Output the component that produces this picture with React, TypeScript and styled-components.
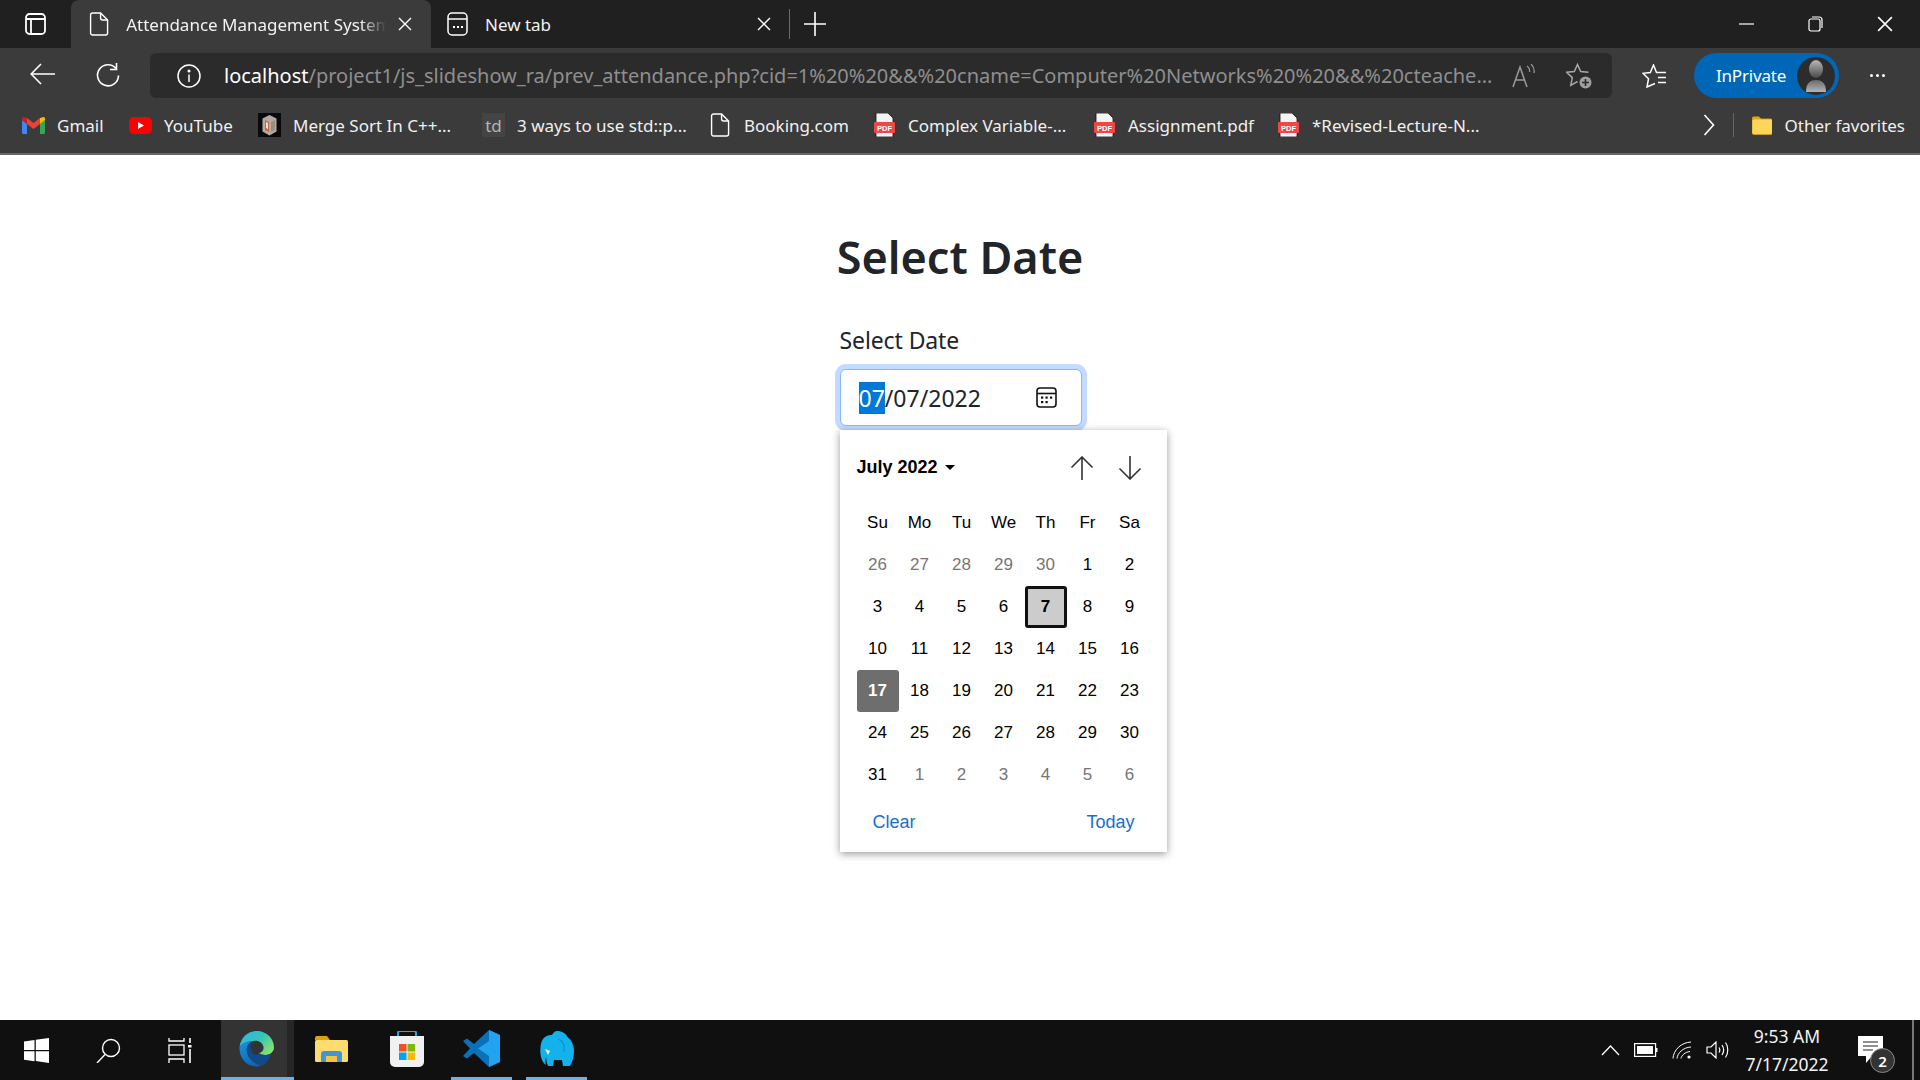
import React from "react";
import styled, { createGlobalStyle } from "styled-components";

const GlobalStyle = createGlobalStyle`
  html, body { margin: 0; padding: 0; background: #fff; }
  body { font-family: "Noto Sans", "Open Sans", sans-serif; }
  * { box-sizing: border-box; }
`;

const Screen = styled.div`
  width: 1920px;
  height: 1080px;
  display: flex;
  flex-direction: column;
  overflow: hidden;
`;

/* ---------- tab strip ---------- */
const TabStrip = styled.div`
  height: 48px;
  flex: none;
  background: #202020;
  display: flex;
  align-items: flex-end;
  color: #fff;
`;
const SidebarBtn = styled.div`
  width: 71px;
  height: 48px;
  padding-left: 25px;
  display: flex;
  align-items: center;
`;
const Tab = styled.div<{ $active?: boolean }>`
  height: ${(p) => (p.$active ? "48px" : "44px")};
  width: ${(p) => (p.$active ? "360px" : "352px")};
  padding: ${(p) => (p.$active ? "0 19px 0 18px" : "0 12px 4px 16px")};
  background: ${(p) => (p.$active ? "#3b3b3b" : "transparent")};
  border-radius: 8px 8px 0 0;
  display: flex;
  align-items: center;
`;
const TabTitle = styled.div<{ $fade?: boolean }>`
  flex: 1;
  margin: 0 12px 0 17px;
  font-size: 17px;
  white-space: nowrap;
  overflow: hidden;
  color: #f2f2f2;
  ${(p) =>
    p.$fade &&
    `-webkit-mask-image: linear-gradient(to right, #000 90%, transparent 100%);
     mask-image: linear-gradient(to right, #000 90%, transparent 100%);`}
`;
const TabDivider = styled.div`
  width: 1px;
  height: 30px;
  margin: 0 0 9px 6px;
  background: #6b6b6b;
`;
const NewTabBtn = styled.div`
  width: 50px;
  height: 48px;
  display: flex;
  align-items: center;
  justify-content: center;
`;
const WindowControls = styled.div`
  margin-left: auto;
  height: 48px;
  display: flex;
  align-items: center;
  gap: 54px;
  padding-right: 27px;
`;

/* ---------- toolbar ---------- */
const Toolbar = styled.div`
  height: 58px;
  flex: none;
  background: #3b3b3b;
  display: flex;
  align-items: center;
  padding: 0 0 3px 30px;
  color: #fff;
`;
const NavButtons = styled.div`
  width: 120px;
  display: flex;
  gap: 40px;
`;
const AddressBar = styled.div`
  width: 1462px;
  height: 45px;
  border-radius: 6px;
  background: #2b2b2b;
  display: flex;
  align-items: center;
  padding: 0 20px 0 27px;
`;
const UrlText = styled.div`
  width: 1280px;
  margin-left: 23px;
  font-size: 20px;
  white-space: nowrap;
  overflow: hidden;
  color: #8f8f8f;
`;
const UrlHost = styled.span`
  color: #fff;
`;
const AddressIcons = styled.div`
  margin-left: auto;
  display: flex;
  align-items: center;
  gap: 30px;
`;
const ToolbarRight = styled.div`
  display: flex;
  align-items: center;
  margin-left: 30px;
`;
const PrivatePill = styled.div`
  width: 145px;
  height: 45px;
  margin-left: 27px;
  border-radius: 23px;
  background: #0067b8;
  display: flex;
  align-items: center;
  justify-content: space-between;
  padding: 0 4px 0 22px;
  font-size: 17px;
  letter-spacing: -0.2px;
`;
const Avatar = styled.div`
  width: 38px;
  height: 38px;
  border-radius: 50%;
  background: #2c2c2c;
  display: flex;
  align-items: center;
  justify-content: center;
`;
const MoreBtn = styled.div`
  margin-left: 31px;
  display: flex;
  gap: 3px;
`;
const MoreDot = styled.span`
  width: 3px;
  height: 3px;
  border-radius: 50%;
  background: #fff;
`;

/* ---------- favorites bar ---------- */
const FavBar = styled.div`
  height: 49px;
  flex: none;
  background: #3b3b3b;
  border-bottom: 2px solid #666;
  display: flex;
  align-items: center;
  padding: 0 0 9px 22px;
  color: #fff;
`;
const FavItem = styled.div<{ $w: number }>`
  width: ${(p) => p.$w}px;
  display: flex;
  align-items: center;
  gap: 12px;
  font-size: 17px;
  white-space: nowrap;
  color: #f0f0f0;
`;
const FavIconBox = styled.div`
  width: 23px;
  height: 24px;
  flex: none;
  display: flex;
  align-items: center;
  justify-content: center;
`;
const TdIcon = styled(FavIconBox)`
  background: #444;
  color: #b5b5b5;
  font-size: 17px;
`;
const FavEnd = styled.div`
  margin-left: auto;
  display: flex;
  align-items: center;
  padding-right: 15px;
`;
const FavDivider = styled.div`
  width: 1px;
  height: 24px;
  margin: 0 18px 0 18px;
  background: #666;
`;

/* ---------- page ---------- */
const Content = styled.main`
  flex: 1;
  background: #fff;
  display: flex;
  flex-direction: column;
  align-items: center;
  padding-top: 72px;
  color: #212529;
`;
const Heading = styled.h1`
  margin: 0;
  height: 60px;
  line-height: 60px;
  font-size: 45px;
  font-weight: 600;
  font-family: "Noto Sans", sans-serif;
`;
const Field = styled.div`
  position: relative;
  width: 242px;
  margin-top: 35px;
  margin-left: 1px;
`;
const Label = styled.label`
  display: block;
  font-size: 23px;
  line-height: 36px;
  margin-bottom: 11px;
  letter-spacing: -0.1px;
`;
const DateInput = styled.div`
  height: 57px;
  border: 1px solid #86b7fe;
  border-radius: 6px;
  box-shadow: 0 0 0 5px #c2dbfe;
  background: #fff;
  display: flex;
  align-items: center;
  justify-content: space-between;
  padding: 0 24px 0 18px;
  font-size: 23px;
  color: #212529;
`;
const DateSegment = styled.span`
  background: #0078d7;
  color: #fff;
`;

/* ---------- date picker ---------- */
const Picker = styled.div`
  position: absolute;
  left: 0;
  top: 108px;
  width: 327px;
  height: 422px;
  padding: 0 16px 0 17px;
  background: #fff;
  box-shadow: 0 2px 8px rgba(0, 0, 0, 0.4);
  font-family: "Liberation Sans", Arial, sans-serif;
  font-size: 17px;
  color: #000;
`;
const PickerHead = styled.div`
  height: 72px;
  padding: 4px 9px 0 0;
  display: flex;
  align-items: center;
  justify-content: space-between;
`;
const MonthLabel = styled.div`
  display: flex;
  align-items: center;
  gap: 7px;
  margin-bottom: 2px;
  font-weight: 700;
  font-size: 18px;
`;
const Caret = styled.span`
  width: 0;
  height: 0;
  border-left: 5px solid transparent;
  border-right: 5px solid transparent;
  border-top: 5px solid #000;
`;
const Arrows = styled.div`
  display: flex;
  gap: 24px;
`;
const DayGrid = styled.div`
  display: grid;
  grid-template-columns: repeat(7, 42px);
  grid-auto-rows: 42px;
`;
const WeekDay = styled.div`
  display: flex;
  align-items: center;
  justify-content: center;
`;
const Day = styled.div<{ $muted?: boolean; $selected?: boolean; $today?: boolean }>`
  display: flex;
  align-items: center;
  justify-content: center;
  border-radius: 3px;
  color: ${(p) => (p.$today ? "#fff" : p.$muted ? "#767676" : "#000")};
  background: ${(p) => (p.$today ? "#6e6e6e" : p.$selected ? "#cccccc" : "transparent")};
  border: ${(p) => (p.$selected ? "3px solid #111" : "none")};
  font-weight: ${(p) => (p.$today || p.$selected ? 700 : 400)};
`;
const PickerFoot = styled.div`
  display: flex;
  justify-content: space-between;
  padding: 16px 16px 0 16px;
  font-size: 18px;
  color: #1a6ed1;
`;

/* ---------- taskbar ---------- */
const Taskbar = styled.footer`
  height: 60px;
  flex: none;
  background: #101010;
  display: flex;
  align-items: stretch;
  color: #fff;
`;
const SysGroup = styled.div`
  display: flex;
  padding-right: 5px;
`;
const SysButton = styled.div`
  width: 72px;
  display: flex;
  align-items: center;
  justify-content: center;
`;
const TaskApp = styled.div<{ $active?: boolean; $running?: boolean }>`
  width: ${(p) => (p.$active ? "73px" : "61px")};
  margin: 0 ${(p) => (p.$active ? "0" : "7px")};
  padding-right: ${(p) => (p.$active ? "3px" : "0")};
  display: flex;
  align-items: center;
  justify-content: center;
  background: ${(p) =>
    p.$active ? "linear-gradient(to right, #333 66px, #262626 66px)" : "transparent"};
  border-bottom: 3px solid ${(p) => (p.$active || p.$running ? "#6cb0e6" : "transparent")};
`;
const Tray = styled.div`
  margin-left: auto;
  display: flex;
  align-items: center;
  border-right: 2px solid #777;
  margin-right: 6px;
  height: 100%;
`;
const TrayIcons = styled.div`
  display: flex;
  align-items: center;
  gap: 14px;
`;
const Clock = styled.div`
  width: 112px;
  margin-left: 2px;
  text-align: center;
  font-size: 17.5px;
  line-height: 28px;
  color: #f4f4f4;
  font-family: "Noto Sans", sans-serif;
`;
const Notify = styled.div`
  position: relative;
  margin: 0 29px 0 15px;
  width: 25px;
  height: 28px;
`;
const NotifyBadge = styled.div`
  position: absolute;
  right: -12px;
  bottom: -9px;
  width: 25px;
  height: 25px;
  border-radius: 50%;
  background: #333;
  border: 1px solid #888;
  font-size: 15px;
  font-weight: 600;
  display: flex;
  align-items: center;
  justify-content: center;
`;

/* ---------- icons ---------- */
type IconProps = { size?: number; color?: string };

const DocIcon = ({ size = 24, color = "#fff" }: IconProps) => (
  <svg width={size * 0.84} height={size} viewBox="0 0 20 24" fill="none" stroke={color} strokeWidth="1.4">
    <path d="M1.5 3a2 2 0 0 1 2-2h8l7 7v13a2 2 0 0 1-2 2h-13a2 2 0 0 1-2-2z" />
    <path d="M11.5 1v5a2 2 0 0 0 2 2h5" />
  </svg>
);
const SidebarIcon = () => (
  <svg width="21" height="22" viewBox="0 0 21 22" fill="none" stroke="#fff" strokeWidth="1.8">
    <rect x="1" y="1" width="19" height="20" rx="3.5" />
    <path d="M1 6h19M6 6v15" />
  </svg>
);
const CloseIcon = ({ size = 14, color = "#fff" }: IconProps) => (
  <svg width={size} height={size} viewBox="0 0 14 14" stroke={color} strokeWidth="1.4">
    <path d="M1 1l12 12M13 1L1 13" />
  </svg>
);
const NewTabIcon = () => (
  <svg width="21" height="24" viewBox="0 0 21 24" fill="none" stroke="#fff" strokeWidth="1.5">
    <rect x="1" y="1" width="19" height="22" rx="4" />
    <path d="M1 7h19" />
    <path d="M6 15h2M10 15h2M14 15h2" strokeWidth="2.2" />
  </svg>
);
const PlusIcon = () => (
  <svg width="22" height="24" viewBox="0 0 22 24" stroke="#fff" strokeWidth="1.6">
    <path d="M11 0v24M0 12h22" />
  </svg>
);
const MinIcon = () => (
  <svg width="15" height="2" viewBox="0 0 15 2" stroke="#fff" strokeWidth="1.2">
    <path d="M0 1h15" />
  </svg>
);
const RestoreIcon = () => (
  <svg width="15" height="16" viewBox="0 0 15 16" fill="none" stroke="#fff" strokeWidth="1.2">
    <rect x="1" y="3" width="11" height="12" rx="2" />
    <path d="M4 1h7a3 3 0 0 1 3 3v8" />
  </svg>
);
const BackIcon = () => (
  <svg width="25" height="22" viewBox="0 0 25 22" fill="none" stroke="#fff" strokeWidth="1.6">
    <path d="M25 11H1.5M11 1L1.2 11 11 21" />
  </svg>
);
const RefreshIcon = () => (
  <svg width="25" height="25" viewBox="0 0 25 25" fill="none" stroke="#fff" strokeWidth="1.6">
    <path d="M21 5.5A10.5 10.5 0 1 0 23.5 12.5" />
    <path d="M21.5 0v6.5H15" />
  </svg>
);
const InfoIcon = () => (
  <svg width="24" height="24" viewBox="0 0 24 24" fill="none" stroke="#fff" strokeWidth="1.5">
    <circle cx="12" cy="12" r="11" />
    <path d="M12 10.5V18" />
    <circle cx="12" cy="7" r="0.8" fill="#fff" />
  </svg>
);
const ReadAloudIcon = () => (
  <svg width="24" height="24" viewBox="0 0 24 24" fill="none" stroke="#9a9a9a" strokeWidth="1.5">
    <path d="M1 23L8 3l7 20M3.6 16h9" />
    <path d="M15 2a6 6 0 0 1 2.5 6M19 0a10 10 0 0 1 3 9" strokeWidth="1.2" />
  </svg>
);
const StarPlusIcon = () => (
  <svg width="26" height="26" viewBox="0 0 26 26" fill="none" stroke="#a8a8a8" strokeWidth="1.5">
    <path d="M22.5 9.3L14.7 8.5 11.5 1.500 8.300 8.500.5 9.300l5.800 5.300-1.500 7.700 6.700-3.800" />
    <circle cx="19.500" cy="19.500" r="6" fill="#a0a0a0" stroke="none" />
    <path d="M19.500 16v7M16 19.500h7" stroke="#2b2b2b" strokeWidth="1.6" />
  </svg>
);
const FavListIcon = () => (
  <svg width="25" height="24" viewBox="0 0 25 24" fill="none" stroke="#fff" strokeWidth="1.5">
    <path d="M24 8.500H14.500L11.500 1 8.300 8.500 1 9.300l5.500 5.500L5 23l8-3.500" />
    <path d="M16 13.500h8M16 18.500h8" />
  </svg>
);
const AvatarFigure = () => (
  <svg width="22" height="34" viewBox="0 0 22 34">
    <defs>
      <linearGradient id="avHead" x1="0" y1="0" x2="0" y2="1">
        <stop offset="0" stopColor="#b8b8b8" />
        <stop offset="1" stopColor="#4a4a4a" />
      </linearGradient>
      <linearGradient id="avBody" x1="0" y1="0" x2="0" y2="1">
        <stop offset="0" stopColor="#6a6a6a" />
        <stop offset="1" stopColor="#b4b4b4" />
      </linearGradient>
    </defs>
    <ellipse cx="11" cy="10" rx="7" ry="9" fill="url(#avHead)" />
    <path d="M1 33c0-9 4-12 10-12s10 3 10 12z" fill="url(#avBody)" />
  </svg>
);
const GmailIcon = () => (
  <svg width="23" height="17" viewBox="0 0 23 17">
    <path d="M0 3v12.500A1.500 1.500 0 0 0 1.500 17H5V7z" fill="#4285f4" />
    <path d="M18 7v10h3.500A1.500 1.500 0 0 0 23 15.500V3z" fill="#34a853" />
    <path d="M5 7l6.500 5L18 7V1l-6.500 5L5 1z" fill="#ea4335" />
    <path d="M0 3l5 4V1L3 .5A2 2 0 0 0 0 3z" fill="#c5221f" />
    <path d="M23 3l-5 4V1l2-.5A2 2 0 0 1 23 3z" fill="#fbbc04" />
  </svg>
);
const YoutubeIcon = () => (
  <svg width="23" height="17" viewBox="0 0 23 17">
    <rect width="23" height="17" rx="5" fill="#f00" />
    <path d="M9 5l6 3.500-6 3.500z" fill="#fff" />
  </svg>
);
const MergeIcon = () => (
  <svg width="23" height="24" viewBox="0 0 23 24">
    <rect width="23" height="24" fill="#0a0a0a" />
    <path d="M11.500 2l7 3.500v13l-7 4-7-4v-13z" fill="#b4aaa4" />
    <path d="M7 7l4 2v10l-4-2z" fill="#c9683a" />
    <path d="M13 9l4-2v10l-4 2z" fill="#9b8d82" />
    <path d="M8 9l2 1v6l-2-1z" fill="#e8ddd2" />
  </svg>
);
const PdfIcon = () => (
  <svg width="23" height="24" viewBox="0 0 23 24">
    <path d="M3 0h12l5 5v19H3z" fill="#f4f4f4" stroke="#111" strokeWidth="0.8" />
    <rect x="1" y="9" width="21" height="11" rx="1" fill="#f04646" />
    <text x="11.500" y="17.500" textAnchor="middle" fontSize="7.500" fontWeight="700" fill="#fff" fontFamily="Liberation Sans">
      PDF
    </text>
  </svg>
);
const ChevronRight = () => (
  <svg width="12" height="22" viewBox="0 0 12 22" fill="none" stroke="#fff" strokeWidth="1.6">
    <path d="M1.500 1l9 10-9 10" />
  </svg>
);
const FavFolder = () => (
  <svg width="24" height="22" viewBox="0 0 24 22">
    <path d="M0 3a2 2 0 0 1 2-2h6l3 3h-11z" fill="#e0a60f" />
    <rect y="4" width="24" height="18" rx="2" fill="#ffd65c" stroke="#d9a21a" />
  </svg>
);
const CalendarIcon = () => (
  <svg width="21" height="21" viewBox="0 0 21 21" fill="none" stroke="#111" strokeWidth="1.6">
    <rect x="1" y="1" width="19" height="19" rx="3" />
    <path d="M1 6.500h19" />
    <g fill="#111" stroke="none">
      <rect x="5" y="9.500" width="2.200" height="2.200" />
      <rect x="9.500" y="9.500" width="2.200" height="2.200" />
      <rect x="14" y="9.500" width="2.200" height="2.200" />
      <rect x="5" y="14" width="2.200" height="2.200" />
      <rect x="9.500" y="14" width="2.200" height="2.200" />
    </g>
  </svg>
);
const ArrowIcon = ({ down }: { down?: boolean }) => (
  <svg width="24" height="24" viewBox="0 0 24 24" fill="none" stroke="#333" strokeWidth="1.6">
    <path d={down ? "M12 0v23M1.500 12.500L12 23l10.500-10.500" : "M12 24V1M1.500 11.500L12 1l10.500 10.500"} />
  </svg>
);
const WindowsIcon = () => (
  <svg width="25" height="25" viewBox="0 0 25 25" fill="#fff">
    <path d="M0 3.500l10.500-1.500v10H0zM11.800 1.800L25 0v12H11.800zM0 13.200h10.500v10L0 21.700zM11.800 13.200H25V25l-13.200-1.900z" />
  </svg>
);
const SearchIcon = () => (
  <svg width="25" height="25" viewBox="0 0 25 25" fill="none" stroke="#fff" strokeWidth="1.4">
    <circle cx="15" cy="10" r="8.500" />
    <path d="M9 16.500L1 25" />
  </svg>
);
const TaskViewIcon = () => (
  <svg width="24" height="25" viewBox="0 0 24 25" fill="none" stroke="#fff" strokeWidth="1.3">
    <path d="M1 0v3h15V0M1 25v-4h15v4" />
    <rect x="1" y="7" width="15" height="10" />
    <path d="M22 0v5M22 11v14" strokeWidth="1.6" />
    <rect x="20" y="7" width="3.500" height="2.500" fill="#fff" stroke="none" />
  </svg>
);
const EdgeIcon = () => (
  <svg width="37" height="37" viewBox="0 0 37 37">
    <defs>
      <linearGradient id="edgeTop" x1="0" y1="0" x2="1" y2="0.7">
        <stop offset="0" stopColor="#2fb5e8" />
        <stop offset="0.55" stopColor="#35c5b8" />
        <stop offset="1" stopColor="#86e36a" />
      </linearGradient>
      <linearGradient id="edgeLow" x1="0" y1="0" x2="0.7" y2="1">
        <stop offset="0" stopColor="#1c93dc" />
        <stop offset="1" stopColor="#0d62b0" />
      </linearGradient>
    </defs>
    <path
      d="M1.500 17C3 7 10 1 19 1c10 0 17 8 17 16.500 0 5-5 7.500-9 7.500-3 0-5.500-1-6-2 3-.5 5-3 4.500-6C24.500 12 20 10 15 11 8 12.500 3 14 1.500 17z"
      fill="url(#edgeTop)"
    />
    <path
      d="M1.500 17C3.500 13 9 10.500 15 11c-5 2-7 6-6 11 1 6 7 12 15 13.500-2 .5-4 1-5.500 1C8.500 36.500 1 28 1.500 17z"
      fill="url(#edgeLow)"
    />
    <path
      d="M21 23c1 1 4 2 6 2 2 0 4-.5 6-1-2 7-7 11-9 11.500-8-1.500-14-7.500-15-13.500-1-5 1-9 6-11-3 3-3 8-1 11 2 3 5 4 7 1z"
      fill="#114a8b"
    />
  </svg>
);
const FolderIcon = () => (
  <svg width="33" height="27" viewBox="0 0 33 27">
    <path d="M0 3a2 2 0 0 1 2-2h10l3 4H0z" fill="#e0a008" />
    <rect y="5" width="33" height="22" rx="1.500" fill="#ffdc6e" />
    <path d="M6 27V19a3 3 0 0 1 3-3h15a3 3 0 0 1 3 3v8h-5v-6H11v6z" fill="#3d96dc" />
    <rect x="11" y="21" width="11" height="6" fill="#f4c542" />
  </svg>
);
const StoreIcon = () => (
  <svg width="36" height="36" viewBox="0 0 36 36">
    <path d="M9 7V2a2 2 0 0 1 2-2h14a2 2 0 0 1 2 2v5" fill="none" stroke="#1ca9e8" strokeWidth="2" />
    <path d="M1 5h34v26a5 5 0 0 1-5 5H6a5 5 0 0 1-5-5z" fill="#f1f1f1" />
    <rect x="10" y="13" width="7.500" height="7.500" fill="#f25022" />
    <rect x="18.500" y="13" width="7.500" height="7.500" fill="#7fba00" />
    <rect x="10" y="21.500" width="7.500" height="7.500" fill="#00a4ef" />
    <rect x="18.500" y="21.500" width="7.500" height="7.500" fill="#ffb900" />
  </svg>
);
const VSCodeIcon = () => (
  <svg width="37" height="37" viewBox="0 0 37 37">
    <path d="M26 0l11 5v27l-11 5-15-14-7 5.500L0 26l7-7.500L0 11l4-2.500 7 5.500z" fill="#0a70b8" />
    <path d="M26 0l11 5v27l-11 5V26L15 18.500 26 11z" fill="#21a3ee" />
  </svg>
);
const ElephantIcon = () => (
  <svg width="34" height="35" viewBox="0 0 34 35">
    <path
      d="M17 0c5 0 9 2.500 10.500 6C31.500 9 34 14 34 20c0 6-1.500 11-4 15h-7l-1-6h-8l-1 6H8c-1.500-3-1.500-6-2-9-.5 2-1 5 0 8-3-2-5-6-5.500-11C0 15 1 9 5 6c3-2 6-2 7-2 1-2 3-4 5-4z"
      fill="#14b2ec"
    />
    <path d="M18 8c5 2 7 7 6 13" fill="none" stroke="#0c93cc" strokeWidth="1.200" />
    <path d="M5 18l5 2-2 4z" fill="#e6f7ff" />
  </svg>
);
const TrayChevron = () => (
  <svg width="19" height="11" viewBox="0 0 19 11" fill="none" stroke="#fff" strokeWidth="1.3">
    <path d="M1 10l8.500-9L18 10" />
  </svg>
);
const BatteryIcon = () => (
  <svg width="24" height="14" viewBox="0 0 24 14">
    <rect x=".6" y=".6" width="21" height="12.800" fill="none" stroke="#fff" strokeWidth="1.200" />
    <rect x="3" y="3" width="16" height="8" fill="#fff" />
    <rect x="22" y="5" width="1.500" height="4" fill="#fff" />
  </svg>
);
const WifiIcon = () => (
  <svg width="20" height="18" viewBox="0 0 20 18" fill="none" stroke="#fff" strokeWidth="1">
    <path d="M1 17.500C1.500 9 9 1.500 19 1M5 17.500c.5-5.500 6-11 14-11.500M9 17.500c.5-3 4-6.500 9-7" />
    <circle cx="17" cy="16" r="1.600" fill="#fff" stroke="none" />
  </svg>
);
const SpeakerIcon = () => (
  <svg width="23" height="18" viewBox="0 0 23 18" fill="none" stroke="#fff" strokeWidth="1.200">
    <path d="M1 6h4l5-5v16l-5-5H1zM13 6.500c1 1.500 1 3.500 0 5M16 4c2 3 2 7 0 10M19.500 1.500c3 4 3 11 0 15" />
  </svg>
);
const NotifyIcon = () => (
  <svg width="25" height="28" viewBox="0 0 25 28">
    <path d="M0 0h25v20H14l-6 7v-7H0z" fill="#fff" />
    <path d="M5 6h15M5 10h15M5 14h10" stroke="#222" strokeWidth="1.200" />
  </svg>
);

/* ---------- data ---------- */
const weekDays = ["Su", "Mo", "Tu", "We", "Th", "Fr", "Sa"];
const prevMonth = [26, 27, 28, 29, 30];
const monthDays = Array.from({ length: 31 }, (_, i) => i + 1);
const nextMonth = [1, 2, 3, 4, 5, 6];

const App = () => {
  return (
    <Screen>
      <GlobalStyle />
      <TabStrip>
        <SidebarBtn>
          <SidebarIcon />
        </SidebarBtn>
        <Tab $active>
          <DocIcon />
          <TabTitle $fade>Attendance Management System</TabTitle>
          <CloseIcon />
        </Tab>
        <Tab>
          <NewTabIcon />
          <TabTitle>New tab</TabTitle>
          <CloseIcon />
        </Tab>
        <TabDivider />
        <NewTabBtn>
          <PlusIcon />
        </NewTabBtn>
        <WindowControls>
          <MinIcon />
          <RestoreIcon />
          <CloseIcon size={16} />
        </WindowControls>
      </TabStrip>

      <Toolbar>
        <NavButtons>
          <BackIcon />
          <RefreshIcon />
        </NavButtons>
        <AddressBar>
          <InfoIcon />
          <UrlText>
            <UrlHost>localhost</UrlHost>
            /project1/js_slideshow_ra/prev_attendance.php?cid=1%20%20&amp;&amp;%20cname=Computer%20Networks%20%20&amp;&amp;%20cteache...
          </UrlText>
          <AddressIcons>
            <ReadAloudIcon />
            <StarPlusIcon />
          </AddressIcons>
        </AddressBar>
        <ToolbarRight>
          <FavListIcon />
          <PrivatePill>
            InPrivate
            <Avatar>
              <AvatarFigure />
            </Avatar>
          </PrivatePill>
          <MoreBtn>
            <MoreDot />
            <MoreDot />
            <MoreDot />
          </MoreBtn>
        </ToolbarRight>
      </Toolbar>

      <FavBar>
        <FavItem $w={107}>
          <FavIconBox>
            <GmailIcon />
          </FavIconBox>
          Gmail
        </FavItem>
        <FavItem $w={129}>
          <FavIconBox>
            <YoutubeIcon />
          </FavIconBox>
          YouTube
        </FavItem>
        <FavItem $w={224}>
          <FavIconBox>
            <MergeIcon />
          </FavIconBox>
          Merge Sort In C++...
        </FavItem>
        <FavItem $w={227}>
          <TdIcon>td</TdIcon>
          3 ways to use std::p...
        </FavItem>
        <FavItem $w={164}>
          <FavIconBox>
            <DocIcon />
          </FavIconBox>
          Booking.com
        </FavItem>
        <FavItem $w={220}>
          <FavIconBox>
            <PdfIcon />
          </FavIconBox>
          Complex Variable-...
        </FavItem>
        <FavItem $w={184}>
          <FavIconBox>
            <PdfIcon />
          </FavIconBox>
          Assignment.pdf
        </FavItem>
        <FavItem $w={230}>
          <FavIconBox>
            <PdfIcon />
          </FavIconBox>
          *Revised-Lecture-N...
        </FavItem>
        <FavEnd>
          <ChevronRight />
          <FavDivider />
          <FavItem $w={153}>
            <FavFolder />
            Other favorites
          </FavItem>
        </FavEnd>
      </FavBar>

      <Content>
        <Heading>Select Date</Heading>
        <Field>
          <Label>Select Date</Label>
          <DateInput>
            <span>
              <DateSegment>07</DateSegment>/07/2022
            </span>
            <CalendarIcon />
          </DateInput>
          <Picker>
            <PickerHead>
              <MonthLabel>
                July 2022
                <Caret />
              </MonthLabel>
              <Arrows>
                <ArrowIcon />
                <ArrowIcon down />
              </Arrows>
            </PickerHead>
            <DayGrid>
              {weekDays.map((d) => (
                <WeekDay key={d}>{d}</WeekDay>
              ))}
              {prevMonth.map((d) => (
                <Day key={`p${d}`} $muted>
                  {d}
                </Day>
              ))}
              {monthDays.map((d) => (
                <Day key={d} $selected={d === 7} $today={d === 17}>
                  {d}
                </Day>
              ))}
              {nextMonth.map((d) => (
                <Day key={`n${d}`} $muted>
                  {d}
                </Day>
              ))}
            </DayGrid>
            <PickerFoot>
              <span>Clear</span>
              <span>Today</span>
            </PickerFoot>
          </Picker>
        </Field>
      </Content>

      <Taskbar>
        <SysGroup>
          <SysButton>
            <WindowsIcon />
          </SysButton>
          <SysButton>
            <SearchIcon />
          </SysButton>
          <SysButton>
            <TaskViewIcon />
          </SysButton>
        </SysGroup>
        <TaskApp $active>
          <EdgeIcon />
        </TaskApp>
        <TaskApp>
          <FolderIcon />
        </TaskApp>
        <TaskApp>
          <StoreIcon />
        </TaskApp>
        <TaskApp $running>
          <VSCodeIcon />
        </TaskApp>
        <TaskApp $running>
          <ElephantIcon />
        </TaskApp>
        <Tray>
          <TrayIcons>
            <TrayChevron />
            <BatteryIcon />
            <WifiIcon />
            <SpeakerIcon />
          </TrayIcons>
          <Clock>
            9:53 AM
            <br />
            7/17/2022
          </Clock>
          <Notify>
            <NotifyIcon />
            <NotifyBadge>2</NotifyBadge>
          </Notify>
        </Tray>
      </Taskbar>
    </Screen>
  );
};

export default App;
